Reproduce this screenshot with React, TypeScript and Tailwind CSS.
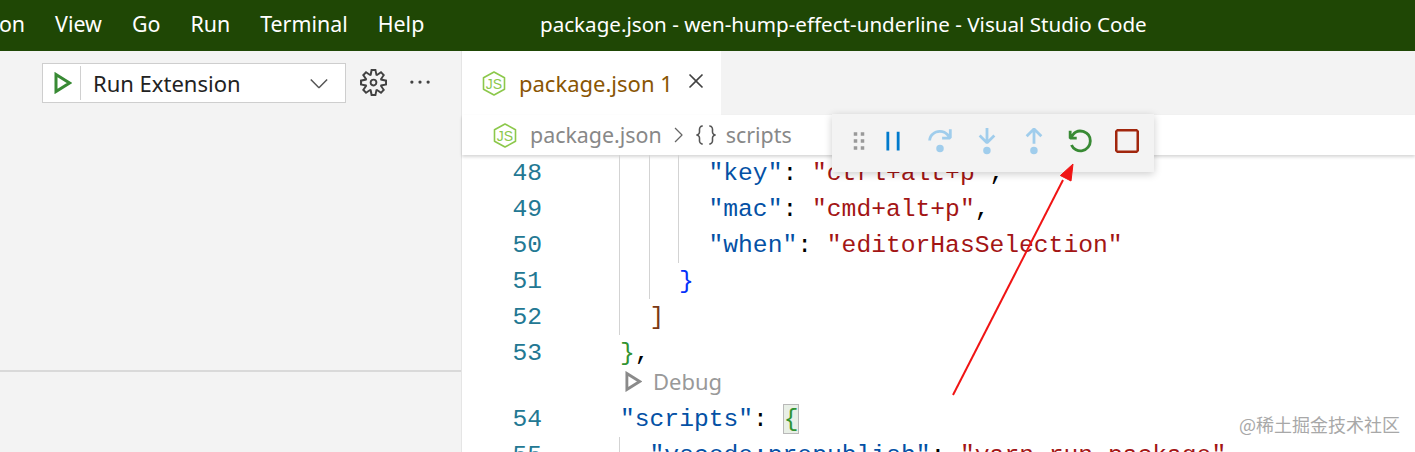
import React from "react";
import {
  VscChevronDown, VscChevronRight, VscClose, VscDebugPause, VscDebugRestart, VscDebugStepInto,
  VscDebugStepOut, VscDebugStepOver, VscDebugStop, VscEllipsis, VscGripper, VscSettingsGear, VscSymbolNamespace,
} from "react-icons/vsc";

const ui = "font-['Noto_Sans','Open_Sans',sans-serif]";

function NodeIcon({ className }: { className: string }) {
  return (
    <svg viewBox="0 0 24 26" className={className} fill="none">
      <path d="M12 1.5 22.5 7.2v11.6L12 24.5 1.5 18.8V7.2Z" stroke="#8cc84b" strokeWidth="1.6" strokeLinejoin="round" />
      <text x="12" y="18" textAnchor="middle" fontSize="14" fontFamily="Liberation Sans, sans-serif" fill="#8cc84b">JS</text>
    </svg>
  );
}

function Play({ className }: { className: string }) {
  return (
    <svg viewBox="0 0 18 22" className={className} fill="none">
      <path d="M2 2.5 15.5 11 2 19.5Z" stroke="currentColor" strokeWidth="3" strokeLinejoin="miter" />
    </svg>
  );
}

const K = ({ c }: { c: React.ReactNode }) => <span className="text-[#0451a5]">{c}</span>;
const S = ({ c }: { c: React.ReactNode }) => <span className="text-[#a31515]">{c}</span>;

function Guides({ n }: { n: number }) {
  return (
    <>
      {Array.from({ length: n }).map((_, i) => (
        <span key={i} className="inline-block h-full w-[29.5px] shrink-0 border-l border-[#d3d3d3]" />
      ))}
    </>
  );
}

function Line({ num, guides, children }: { num: number; guides: number; children: React.ReactNode }) {
  return (
    <div className="flex h-9 items-center">
      <div className="w-[81px] shrink-0 pr-[1px] text-right text-[#237893]">{num}</div>
      <div className="w-[76px] shrink-0" />
      <Guides n={guides} />
      <pre className="pl-[1px] font-[inherit]">{children}</pre>
    </div>
  );
}

export default function App() {
  return (
    <div className={`relative flex h-[452px] w-[1415px] flex-col overflow-hidden bg-white ${ui}`}>
      <header className="flex h-[51px] shrink-0 items-center bg-[#1f4705] pb-[2px] text-[21.4px] text-white">
        <nav className="ml-[-66px] flex w-[606px] shrink-0 gap-[30px]">
          <span>Selection</span>
          <span>View</span>
          <span>Go</span>
          <span>Run</span>
          <span>Terminal</span>
          <span>Help</span>
        </nav>
        <span className="whitespace-nowrap text-[20.6px]">package.json - wen-hump-effect-underline - Visual Studio Code</span>
      </header>

      <div className="flex min-h-0 flex-1">
        <aside className="flex w-[462px] shrink-0 flex-col border-r border-[#e5e5e5] bg-[#f3f3f3]">
          <div className="flex h-[321px] shrink-0 items-start border-b-2 border-[#d9d9d9] pl-[42px] pt-[12px]">
            <div className="flex h-10 w-[304px] items-center border border-[#cecece] bg-white">
              <div className="flex h-[34px] w-[38px] items-center justify-center border-r border-[#d0d0d0]">
                <Play className="ml-[2px] h-[22px] w-[18px] text-[#388a34]" />
              </div>
              <span className="ml-[12px] flex-1 text-[22px] text-[#222]">Run Extension</span>
              <VscChevronDown className="mr-[12px] size-[28px] text-[#555]" />
            </div>
            <VscSettingsGear className="ml-[14px] mt-[6px] size-[27px] text-[#424242]" />
            <VscEllipsis className="ml-[20px] mt-[6px] size-[26px] text-[#424242]" />
          </div>
        </aside>

        <main className="flex min-w-0 flex-1 flex-col">
          <div className="flex h-[64px] shrink-0 bg-[#f3f3f3]">
            <div className="flex w-[259px] items-center bg-white pl-[20px]">
              <NodeIcon className="h-[27px] w-[24px]" />
              <span className="ml-[13px] text-[22px] text-[#895503]">package.json 1</span>
              <VscClose className="mb-[4px] ml-[10px] size-[26px] text-[#424242]" />
            </div>
          </div>
          <div className="flex h-[40px] shrink-0 items-center pl-[31px] text-[21.4px] text-[#888] shadow-[0_2px_3px_rgba(0,0,0,0.16)]">
            <NodeIcon className="h-[27px] w-[24px]" />
            <span className="ml-[13px]">package.json</span>
            <VscChevronRight className="ml-[4px] size-[24px] text-[#666]" />
            <VscSymbolNamespace className="ml-[3px] size-[26px] text-[#555]" />
            <span className="ml-[7px]">scripts</span>
          </div>
          <div className="font-['Liberation_Mono',monospace] text-[24.65px] text-black">
            <Line num={48} guides={3}><K c={'"key"'} />: <S c={'"ctrl+alt+p"'} />,</Line>
            <Line num={49} guides={3}><K c={'"mac"'} />: <S c={'"cmd+alt+p"'} />,</Line>
            <Line num={50} guides={3}><K c={'"when"'} />: <S c={'"editorHasSelection"'} /></Line>
            <Line num={51} guides={2}><span className="text-[#0431fa]">{"}"}</span></Line>
            <Line num={52} guides={1}><span className="text-[#7b3814]">{"]"}</span></Line>
            <Line num={53} guides={0}><span className="text-[#319331]">{"}"}</span>,</Line>
            <div className={`flex h-[30px] items-center pb-[10px] pl-[163px] text-[22px] text-[#999] ${ui}`}>
              <Play className="h-[21px] w-[17px] text-[#8a8a8a]" />
              <span className="ml-[11px]">Debug</span>
            </div>
            <Line num={54} guides={0}>
              <K c={'"scripts"'} />: <span className="border border-[#b9b9b9] bg-[#e8efe6] text-[#319331]">{"{"}</span>
            </Line>
            <Line num={55} guides={1}><K c={'"vscode:prepublish"'} />: <S c={'"yarn run package"'} /></Line>
          </div>
        </main>
      </div>

      <div className="absolute left-[832px] top-[114px] flex h-[58px] w-[322px] items-center bg-[#f3f3f3] pb-[4px] pl-[13px] shadow-[0_2px_8px_rgba(0,0,0,0.2)]">
        <VscGripper className="size-[28px] text-[#999]" />
        <VscDebugPause className="ml-[5px] size-[30px] text-[#007acc]" />
        <VscDebugStepOver className="ml-[17px] size-[30px] text-[#a0cdec]" />
        <VscDebugStepInto className="ml-[17px] size-[30px] text-[#a0cdec]" />
        <VscDebugStepOut className="ml-[17px] size-[30px] text-[#a0cdec]" />
        <VscDebugRestart className="ml-[16px] size-[30px] text-[#388a34]" />
        <VscDebugStop className="ml-[16px] size-[32px] text-[#a1260d]" />
      </div>

      <svg className="pointer-events-none absolute left-[945px] top-[155px]" width="140" height="245" fill="none">
        <path d="M8 240 118 25" stroke="#f01414" strokeWidth="2" />
        <path d="M128 9 126 26 115.4 20.5Z" fill="#f01414" stroke="#f01414" />
      </svg>

      <div className="absolute left-[1239px] top-[411px] font-['Noto_Sans_CJK_SC',sans-serif] text-[18px] text-[#a8a8a8]">@稀土掘金技术社区</div>
    </div>
  );
}
